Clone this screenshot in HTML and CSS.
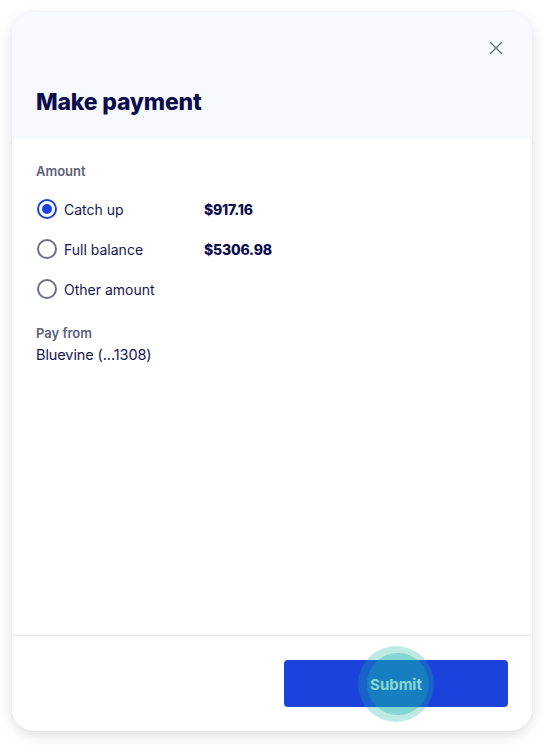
FILE: index.html
```html
<!DOCTYPE html>
<html>
<head>
<meta charset="utf-8">
<link rel="stylesheet" href="styles.css">
</head>
<body>
<div class="card">
  <div class="header">
    <button class="close" aria-label="Close">
      <svg width="14" height="14" viewBox="0 0 14 14"><path d="M1.5 1.5 L12.5 12.5 M12.5 1.5 L1.5 12.5" stroke="#6b7185" stroke-width="1.4" stroke-linecap="round"/></svg>
    </button>
    <h1 class="title">Make payment</h1>
  </div>
  <div class="content">
    <div class="label">Amount</div>
    <div class="options">
      <div class="option">
        <span class="radio checked"></span>
        <span class="opt-text">Catch up</span>
        <span class="opt-amount">$917.16</span>
      </div>
      <div class="option">
        <span class="radio"></span>
        <span class="opt-text">Full balance</span>
        <span class="opt-amount">$5306.98</span>
      </div>
      <div class="option">
        <span class="radio"></span>
        <span class="opt-text">Other amount</span>
      </div>
    </div>
    <div class="label pay-label">Pay from</div>
    <div class="account">Bluevine (...1308)</div>
  </div>
  <div class="footer">
    <button class="submit">Submit<span class="ripple"><span class="ripple-inner"></span></span></button>
  </div>
</div>
</body>
</html>
```

FILE: styles.css
```css
* { box-sizing: border-box; }
html, body { margin: 0; padding: 0; background: #ffffff; }
body {
  padding: 12px 20px 21px 12px;
  font-family: "Inter", "Lato", sans-serif;
  color: #101451;
}
.card {
  width: 520px;
  height: 719px;
  background: #ffffff;
  border-radius: 22px;
  box-shadow: 0 4px 14px rgba(0, 0, 0, 0.13), 0 0 3px rgba(0,0,0,0.04);
  display: flex;
  flex-direction: column;
  overflow: hidden;
}
.header {
  background: #f8f9fd;
  height: 127px;
  padding: 0 24px 0 24px;
  display: flex;
  flex-direction: column;
}
.close {
  align-self: flex-end;
  margin-top: 29px;
  margin-right: 5px;
  width: 14px;
  height: 14px;
  padding: 0;
  border: 0;
  background: none;
  display: flex;
}
.title {
  margin: 33px 0 0 0;
  font-size: 23px;
  line-height: 28px;
  font-weight: 800;
  color: #0b0c4c;
  letter-spacing: -0.2px;
}
.content {
  flex: 1;
  padding: 24px 24px 0 24px;
  border-bottom: 1px solid #e3e4e8;
}
.label {
  font-size: 13px;
  line-height: 16px;
  font-weight: 600;
  color: #5d6379;
}
.options {
  margin-top: 10px;
  display: flex;
  flex-direction: column;
}
.option {
  height: 40px;
  display: flex;
  align-items: center;
  padding-left: 1px;
}
.radio {
  width: 20px;
  height: 20px;
  border: 2px solid #6b7087;
  border-radius: 50%;
  display: flex;
  align-items: center;
  justify-content: center;
}
.radio.checked { border-color: #1b43db; }
.radio.checked::after {
  content: "";
  width: 10px;
  height: 10px;
  border-radius: 50%;
  background: #1b43db;
}
.opt-text {
  margin-left: 7px;
  width: 140px;
  font-size: 14px;
  color: #14174f;
}
.opt-amount {
  font-size: 14px;
  font-weight: 800;
  color: #0b0c4c;
  letter-spacing: -0.2px;
}
.pay-label { margin-top: 16px; }
.account {
  margin-top: 4px;
  font-size: 14.5px;
  line-height: 20px;
  color: #14174f;
  letter-spacing: -0.1px;
}
.footer {
  height: 95px;
  padding: 24px 24px 0 0;
  display: flex;
  justify-content: flex-end;
  align-items: flex-start;
}
.submit {
  position: relative;
  width: 224px;
  height: 47px;
  border: 0;
  border-radius: 4px;
  background: #1b43db;
  color: #ffffff;
  font-family: "Inter", "Lato", sans-serif;
  font-size: 15px;
  font-weight: 700;
  padding-top: 2px;
  overflow: visible;
}
.ripple {
  position: absolute;
  left: 74px;
  top: -14px;
  width: 76px;
  height: 76px;
  border-radius: 50%;
  background: rgba(20, 180, 165, 0.28);
  display: flex;
  align-items: center;
  justify-content: center;
}
.ripple-inner {
  width: 62px;
  height: 62px;
  margin-left: 4px;
  border-radius: 50%;
  background: rgba(20, 180, 165, 0.35);
}
```
